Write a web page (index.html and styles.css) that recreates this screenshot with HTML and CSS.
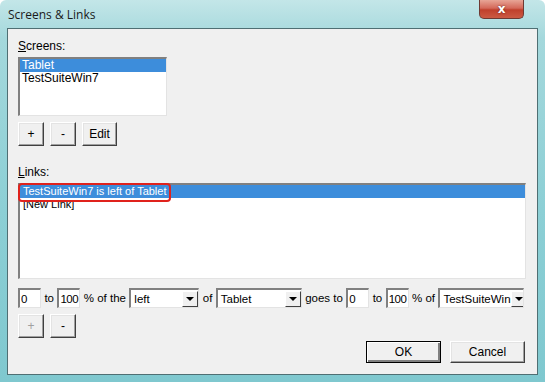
FILE: index.html
```html
<!DOCTYPE html>
<html>

<head>
  <meta charset='utf-8'>
  <title>Screens &amp; Links</title>
  <link rel="stylesheet" href="styles.css">
</head>

<body>
  <div class='window'>
    <div class='titlebar'>
      <span class='title'>Screens &amp; Links</span>
      <button class='close'>x</button>
    </div>
    <div class='client'>
      <div class='label'><u>S</u>creens:</div>
      <div class='listbox screens'>
        <div class='item selected'>Tablet</div>
        <div class='item'>TestSuiteWin7</div>
      </div>
      <div class='buttons'>
        <button class='btn small'>+</button>
        <button class='btn small'>-</button>
        <button class='btn edit'>Edit</button>
      </div>

      <div class='label links-label'><u>L</u>inks:</div>
      <div class='listbox links'>
        <div class='item selected'><span class='mark'>TestSuiteWin7 is left of Tablet</span></div>
        <div class='item'>[New Link]</div>
      </div>

      <div class='rule-row'>
        <input class='field num' type='text' value='0'>
        <span>to</span>
        <input class='field num' type='text' value='100'>
        <span>% of the</span>
        <div class='combo side'><span>left</span><i class='arrow'></i></div>
        <span>of</span>
        <div class='combo screen'><span>Tablet</span><i class='arrow'></i></div>
        <span>goes to</span>
        <input class='field num' type='text' value='0'>
        <span>to</span>
        <input class='field num' type='text' value='100'>
        <span>% of</span>
        <div class='combo target'><span>TestSuiteWin</span><i class='arrow'></i></div>
      </div>

      <div class='buttons'>
        <button class='btn small' disabled>+</button>
        <button class='btn small'>-</button>
      </div>

      <div class='footer'>
        <button class='btn wide default'>OK</button>
        <button class='btn wide'>Cancel</button>
      </div>
    </div>
  </div>
</body>

</html>
```

FILE: styles.css
```css
body {
  margin: 0;
  font-family: "Liberation Sans", Arial, sans-serif;
  font-size: 11px;
  color: #000;
  background-color: #fff;
}

.window {
  width: 545px;
  height: 382px;
  box-sizing: border-box;
  padding: 0 7px 7px 7px;
  display: flex;
  flex-direction: column;
  background: linear-gradient(180deg, #c3e6e8 0%, #a4d8dc 10%, #8ccfd5 55%, #7fc8cf 100%);
  border-radius: 6px 6px 0 0;
}

.titlebar {
  height: 28px;
  display: flex;
  align-items: flex-start;
  justify-content: space-between;
  flex-shrink: 0;
}

.title {
  font-family: "Open Sans", "Liberation Sans", sans-serif;
  font-size: 12px;
  margin: 6px 0 0 1px;
  color: #1a1a1a;
}

.close {
  width: 45px;
  height: 19px;
  margin-right: 14px;
  padding: 0;
  border: 1px solid #6e3a33;
  border-top: none;
  border-radius: 0 0 5px 5px;
  background: linear-gradient(180deg, #e8a596 0%, #d4695a 45%, #c0402c 55%, #cb5a43 100%);
  color: #fff;
  font-family: "DejaVu Sans", sans-serif;
  font-weight: bold;
  font-size: 12px;
  line-height: 17px;
  text-shadow: 0 0 2px #5a1a10;
}

.client {
  flex: 1;
  background-color: #f0f0f0;
  border: 1px solid #4f6f73;
  padding: 10px 10px 0 10px;
  display: flex;
  flex-direction: column;
}

.label {
  height: 15px;
  margin-bottom: 3px;
  font-size: 12px;
}

.links-label {
  margin-top: 19px;
}

.listbox {
  background-color: #fff;
  border-top: 2px solid #808080;
  border-left: 2px solid #808080;
  border-right: 1px solid #e3e3e3;
  border-bottom: 1px solid #e3e3e3;
  box-sizing: border-box;
  font-size: 12px;
}

.screens {
  width: 149px;
  height: 59px;
}

.links {
  width: 508px;
  height: 96px;
}

.item {
  height: 13px;
  line-height: 13px;
  padding-left: 2px;
  white-space: nowrap;
}

.links .item {
  font-size: 11px;
  padding-left: 3px;
}

.item.selected {
  background-color: #3d8ddb;
  color: #fff;
}

.mark {
  display: inline-block;
  position: relative;
}

.mark::after {
  content: '';
  position: absolute;
  left: -5px;
  right: -5px;
  top: -2px;
  bottom: -4px;
  border: 2px solid #e0221c;
  border-radius: 4px;
}

.buttons {
  display: flex;
  gap: 6px;
  margin-top: 6px;
}

.btn {
  height: 24px;
  padding: 0;
  font-family: "Liberation Sans", Arial, sans-serif;
  font-size: 12px;
  color: #000;
  background-color: #f0f0f0;
  border: 1px solid;
  border-color: #fff #404040 #404040 #fff;
  box-shadow: inset -1px -1px 0 #a0a0a0, inset 1px 1px 0 #e3e3e3;
}

.btn:disabled {
  color: #a0a0a0;
}

.small {
  width: 26px;
}

.edit {
  width: 35px;
}

.rule-row {
  display: flex;
  align-items: center;
  gap: 3.4px;
  margin-top: 9px;
  height: 20px;
  white-space: nowrap;
  font-size: 11.5px;
}

.rule-row > * {
  flex-shrink: 0;
}

.field {
  height: 20px;
  box-sizing: border-box;
  padding: 0 0 0 1px;
  font-family: "Liberation Sans", Arial, sans-serif;
  font-size: 11.5px;
  letter-spacing: -0.5px;
  background-color: #fff;
  border-top: 2px solid #808080;
  border-left: 2px solid #808080;
  border-right: 1px solid #e3e3e3;
  border-bottom: 1px solid #e3e3e3;
  outline: none;
}

.num {
  width: 23px;
}

.combo {
  height: 20px;
  box-sizing: border-box;
  display: flex;
  align-items: center;
  justify-content: space-between;
  background-color: #fff;
  border-top: 2px solid #808080;
  border-left: 2px solid #808080;
  border-right: 1px solid #e3e3e3;
  border-bottom: 1px solid #e3e3e3;
  padding-left: 3px;
  overflow: hidden;
}

.side {
  width: 70px;
}

.screen {
  width: 86px;
}

.target {
  width: 86px;
}

.arrow {
  width: 16px;
  height: 16px;
  box-sizing: border-box;
  flex-shrink: 0;
  display: flex;
  align-items: center;
  justify-content: center;
  background-color: #f0f0f0;
  border: 1px solid;
  border-color: #fff #404040 #404040 #fff;
}

.arrow::before {
  content: '';
  border-left: 4px solid transparent;
  border-right: 4px solid transparent;
  border-top: 4px solid #000;
}

.footer {
  display: flex;
  justify-content: flex-end;
  gap: 9px;
  margin-top: auto;
  margin-bottom: 11px;
  padding-right: 2px;
}

.wide {
  width: 75px;
  height: 22px;
}

.default {
  border: 1px solid #000;
  box-shadow: inset 1px 1px 0 #fff, inset -2px -2px 0 #808080;
}
```
